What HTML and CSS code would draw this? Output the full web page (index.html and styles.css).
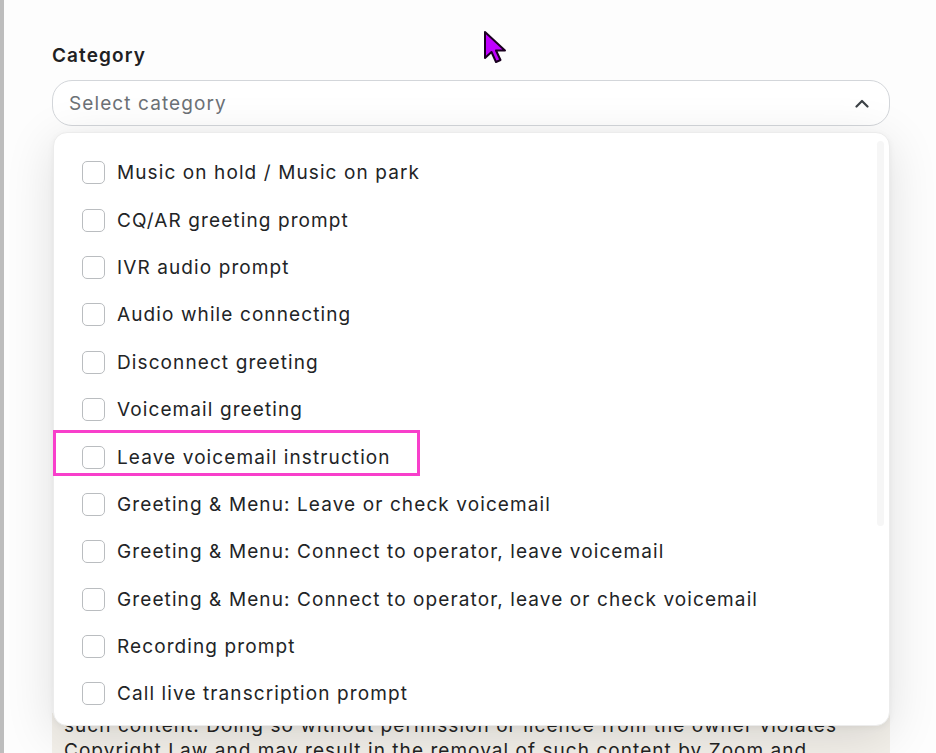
FILE: index.html
```html
<!DOCTYPE html>
<html lang="en">
<head>
  <meta charset="UTF-8">
  <meta name="viewport" content="width=device-width, initial-scale=1.0">
  <title>Upload audio</title>
  <link rel="stylesheet" href="styles.css">
</head>
<body>
  <div class="edge"></div>

  <main class="form">
    <label class="field-label" for="category">Category</label>

    <div class="field">
      <button class="select" id="category" type="button">
        <span class="placeholder">Select category</span>
        <svg class="chevron" width="14" height="9" viewBox="0 0 14 9">
          <path d="M1.5 7.5 L7 2 L12.5 7.5" fill="none" stroke="#3d4247" stroke-width="2.2" stroke-linecap="round" stroke-linejoin="round"/>
        </svg>
      </button>

      <div class="menu">
        <ul class="options">
          <li class="option"><span class="box"></span>Music on hold / Music on park</li>
          <li class="option"><span class="box"></span>CQ/AR greeting prompt</li>
          <li class="option"><span class="box"></span>IVR audio prompt</li>
          <li class="option"><span class="box"></span>Audio while connecting</li>
          <li class="option"><span class="box"></span>Disconnect greeting</li>
          <li class="option"><span class="box"></span>Voicemail greeting</li>
          <li class="option marked"><span class="box"></span>Leave voicemail instruction</li>
          <li class="option"><span class="box"></span>Greeting &amp; Menu: Leave or check voicemail</li>
          <li class="option"><span class="box"></span>Greeting &amp; Menu: Connect to operator, leave voicemail</li>
          <li class="option"><span class="box"></span>Greeting &amp; Menu: Connect to operator, leave or check voicemail</li>
          <li class="option"><span class="box"></span>Recording prompt</li>
          <li class="option"><span class="box"></span>Call live transcription prompt</li>
        </ul>
        <div class="scrollbar"></div>
      </div>
    </div>

    <div class="notice">
      <p>
        such content. Doing so without permission or licence from the owner violates<br>
        Copyright Law and may result in the removal of such content by Zoom and
      </p>
    </div>
  </main>

  <svg class="pointer" width="26" height="36" viewBox="0 0 26 36">
    <path d="M2 2 L2 28 L8.5 22 L13 32 L17.5 30 L13 20.5 L22 20.5 Z" fill="#c000ff" stroke="#1a0020" stroke-width="2" stroke-linejoin="round"/>
  </svg>
</body>
</html>
```

FILE: styles.css
```css
body {
  margin: 0;
  height: 753px;
  overflow: hidden;
  display: flex;
  background-color: #fdfdfd;
  font-family: 'Inter', 'Liberation Sans', sans-serif;
  color: #222426;
  letter-spacing: 1.1px;
}

.edge {
  width: 4px;
  flex-shrink: 0;
  background-color: #bdbdbd;
}

.form {
  flex: 1;
  padding: 44px 46px 0 48px;
}

.field-label {
  display: block;
  font-size: 19px;
  font-weight: 600;
  line-height: 24px;
  color: #1f2123;
  margin-bottom: 12px;
}

.field {
  position: relative;
}

.select {
  width: 100%;
  height: 46px;
  display: flex;
  align-items: center;
  justify-content: space-between;
  padding: 0 20px 0 16px;
  border: 1px solid #d3d6da;
  border-radius: 20px;
  background-color: #fff;
  font: inherit;
  font-size: 19px;
  letter-spacing: 1.1px;
  color: #6c7176;
  cursor: pointer;
}

.chevron {
  display: block;
}

.menu {
  position: absolute;
  top: 52px;
  left: 1px;
  right: 0;
  height: 592px;
  background-color: #fff;
  border: 1px solid #ececec;
  border-radius: 14px;
  box-shadow: 0 10px 50px rgba(0, 0, 0, 0.12), 0 2px 6px rgba(0, 0, 0, 0.05);
  z-index: 2;
}

.options {
  list-style: none;
  margin: 0;
  padding: 16px 0 0 0;
}

.option {
  display: flex;
  align-items: center;
  height: 47.4px;
  padding-left: 28px;
  font-size: 19px;
  color: #222426;
}

.box {
  width: 21px;
  height: 21px;
  flex-shrink: 0;
  border: 1.5px solid #babdc0;
  border-radius: 5px;
  margin-right: 12px;
}

.marked {
  position: relative;
}

.marked::after {
  content: '';
  position: absolute;
  left: -1px;
  top: -3px;
  width: 361px;
  height: 40px;
  border: 3px solid #f83fcb;
}

.scrollbar {
  position: absolute;
  top: 8px;
  right: 5px;
  width: 7px;
  height: 385px;
  border-radius: 4px;
  background-color: #f6f6f6;
}

.notice {
  margin-top: 587px;
  background-color: #f3f0ea;
  padding: 0 12px 20px;
}

.notice p {
  margin: 0;
  font-size: 19px;
  line-height: 25px;
  letter-spacing: 1.05px;
  color: #242424;
}

.pointer {
  position: absolute;
  left: 483px;
  top: 30px;
}
```
